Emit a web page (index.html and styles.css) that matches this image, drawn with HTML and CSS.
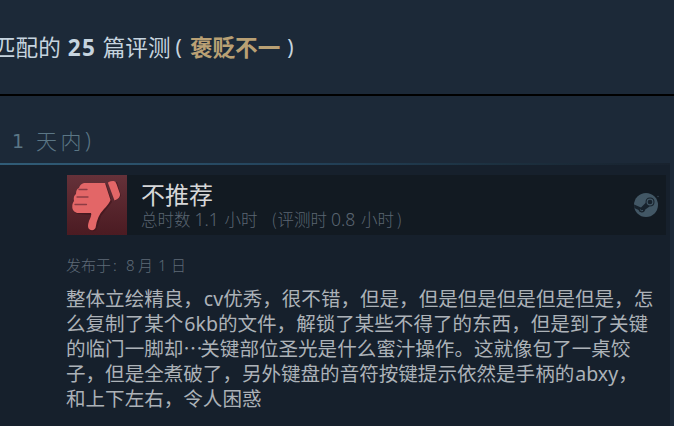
FILE: index.html
```html
<!DOCTYPE html>
<html lang="zh-CN">
<head>
<meta charset="utf-8">
<title>评测</title>
<link rel="stylesheet" href="styles.css">
</head>
<body>
<header class="summary"><span class="summary-text">匹配的</span><b class="count">25</b><span class="summary-text">篇评测</span><span class="paren open">(</span><b class="rating">褒贬不一</b><span class="paren close">)</span></header>
<main>
<h2 class="period"><span class="day">1</span><span>天内</span><span class="end">)</span></h2>
<article class="review">
<div class="verdict">
<svg class="thumb" viewBox="0 0 60 60"><defs><linearGradient id="g" x2="0" y2="1"><stop stop-color="#653139"/><stop offset="1" stop-color="#4b1b22"/></linearGradient></defs><path fill="url(#g)" d="M0 0h60v60H0z"/><g transform="translate(1 1)" fill="#40151c" opacity=".65"><path d="M17 8H38L44 26L33 40L29 52Q28 56 23 55Q20 52 22 46L24 39L10 38Q5 37 6 31Q8 14 17 8Z"/><path d="M42 7L49 6L53 20L47 25Z"/></g><path fill="#e36667" d="M17 8Q13 9 12 13Q9 14 9 19Q6 21 7 26Q4 30 6 35Q7 37 10 38H24Q25 40 22 46Q20 52 22 54Q26 57 28.500 53Q30 41 37 34Q42 29 43.500 25L38 8Z"/><path d="M41 8Q41 6.500 46 6Q48.500 5.500 49.500 9L53 19Q53.500 23 47.500 25.500Z" fill="#e36667"/><path d="M12 14.500H20M10 22H21M8 29.500H19.500" stroke="#8d3c44" stroke-width="1.300" stroke-linecap="round"/></svg>
<div class="verdict-copy"><h3>不推荐</h3><p class="hours"><span>总时数</span><span class="num">1.1</span><span>小时</span><span class="hours-open">(</span><span>评测时</span><span class="num">0.8</span><span>小时</span><span class="hours-close">)</span></p></div>
<svg class="steam" viewBox="0 0 26 26"><circle cx="13" cy="13" r="12" fill="#425765"/><path d="M1 12.500L8 15.500L12.500 11Q12.300 5.500 17 5.500Q21.500 5.500 21.500 10Q21.500 14.500 16.500 14.500L12.300 17.500Q11.500 20.800 8.500 20.500Q6 20 5.500 18L1.300 16Z" fill="#17222c"/><circle cx="17" cy="10" r="2.900" fill="none" stroke="#425765" stroke-width="1.100"/><path d="M7 17.500Q8 19.200 10 18.500" fill="none" stroke="#425765"/><circle cx="25" cy="4.500" r=".8" fill="#33434f"/></svg>
</div>
<p class="date"><span>发布于</span><span class="colon">:</span><span class="month">8</span><span>月</span><span class="num">1</span><span>日</span></p>
<div class="content">
<p>整体立绘精良，<span class="latin">cv</span>优秀，很不错，但是，但是但是但是但是但是，怎</p>
<p>么复制了某个<span class="latin">6kb</span>的文件，解锁了某些不得了的东西，但是到了关键</p>
<p>的临门一脚却<span class="dots">⋯</span>关键部位圣光是什么蜜汁操作。这就像包了一桌饺</p>
<p>子，但是全煮破了，另外键盘的音符按键提示依然是手柄的<span class="latin">abxy</span>，</p>
<p>和上下左右，令人困惑</p>
</div>
</article>
</main>
</body>
</html>
```
FILE: styles.css
```css
* { box-sizing: border-box; margin: 0; padding: 0; }
body {
  width: 674px;
  height: 426px;
  overflow: hidden;
  background: #1c2938;
  font-family: "Noto Sans CJK SC", sans-serif;
  white-space: nowrap;
}
svg { display: block; flex: none; }
.summary {
  display: flex;
  height: 96px;
  padding-top: 31px;
  border-bottom: 2px solid #000;
  color: #c6d4df;
  font-size: 22.6px;
  line-height: 32px;
}
.summary-text:first-child { margin-left: -7px; }
.count { width: 28px; margin: 0 7px; padding-top: 1px; font-family: "Noto Sans", sans-serif; font-size: 22.5px; letter-spacing: 1.3px; }
.paren { font-family: "Noto Sans", sans-serif; font-size: 21px; }
.open { margin: 0 8px 0 5px; }
.close { margin-left: 7px; }
.rating { color: #b9a074; }
.period {
  display: flex;
  height: 67px;
  padding: 28px 0 0 12px;
  color: #5b7685;
  font-size: 21px;
  font-weight: 300;
  line-height: 32px;
  letter-spacing: 3.5px;
}
.day { width: 24px; padding-top: 1px; font-family: "DejaVu Sans", sans-serif; font-size: 19px; font-weight: 400; }
.end { font-family: "Noto Sans", sans-serif; }
.review {
  width: 670px;
  height: 263px;
  padding: 10px 4px 0 67px;
  border-top: 2px solid;
  border-image: linear-gradient(90deg, #315d78, #23425a 45%, #1c303f 75%, #18222e) 1;
  background: #16202c;
}
.verdict { display: flex; width: 599px; height: 60px; background: #121a22; }
.thumb { width: 60px; height: 60px; }
.verdict-copy { flex: 1; padding-left: 14px; }
h3 { height: 34px; color: #d6d7d8; font-size: 24px; font-weight: 400; line-height: 37px; }
.hours { display: flex; color: #5b6672; font-size: 16.5px; font-weight: 300; line-height: 20px; }
.hours .num { width: 25px; margin: 0 5px 0 4px; font-family: "Noto Sans", sans-serif; font-size: 17.5px; }
.hours-open { width: 6px; margin-left: 14px; }
.hours-close { margin-left: 3px; }
.steam { width: 26px; height: 26px; margin: 17px 7px 0 0; }
.date { display: flex; height: 24px; margin: 18px 0 0 -1px; color: #5f6b78; font-size: 15px; line-height: 24px; font-weight: 300; }
.colon { width: 10px; padding-left: 2px; }
.month { width: 9px; margin: 0 3px 0 5px; font-family: "Noto Sans", sans-serif; }
.date .num { width: 8px; margin: 0 5px; font-family: "Noto Sans", sans-serif; }
.content { margin: 8px 0 0 -1px; color: #acb2b8; font-size: 19.56px; line-height: 25px; }
.content p { height: 25px; }
.latin { padding-left: 1px; font-family: "Noto Sans", sans-serif; }
.dots { display: inline-block; width: 17px; }
```
